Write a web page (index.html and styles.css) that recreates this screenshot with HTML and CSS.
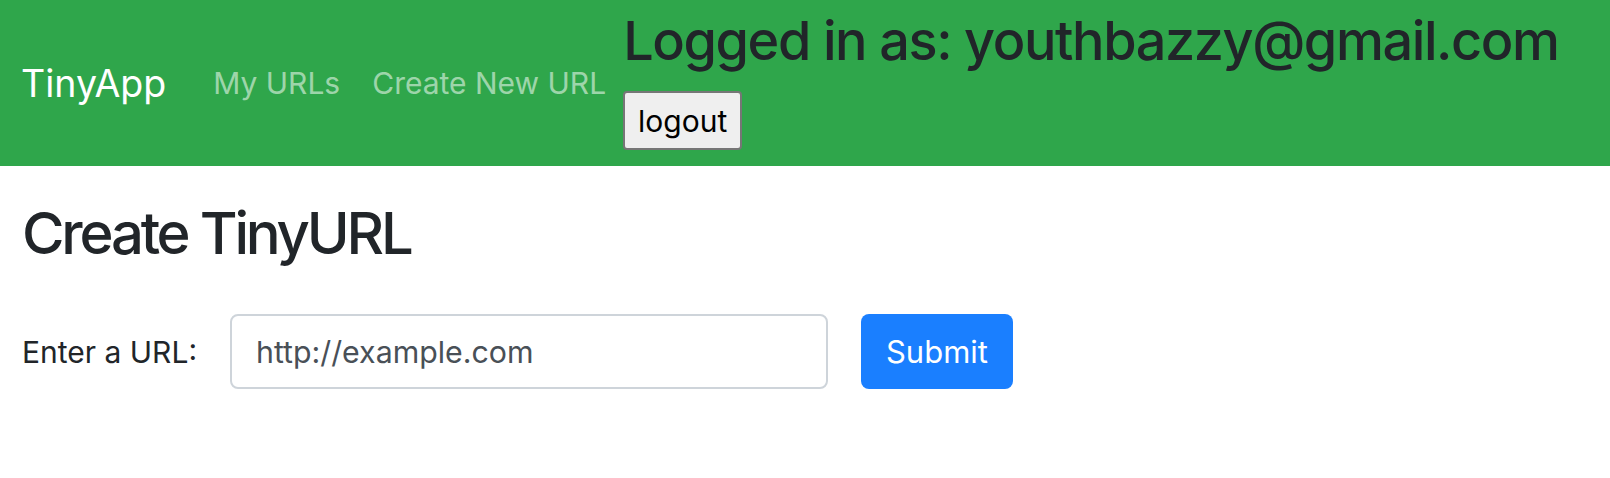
FILE: index.html
```html
<!DOCTYPE html>
<html lang="en">
<head>
<meta charset="utf-8">
<title>TinyApp</title>
<link rel="stylesheet" href="styles.css">
</head>
<body>
<nav class="navbar">
  <a class="brand" href="#">TinyApp</a>
  <div class="nav-links">
    <a class="nav-link" href="#">My URLs</a>
    <a class="nav-link" href="#">Create New URL</a>
  </div>
  <div class="user-box">
    <h2 class="user-title">Logged in as: youthbazzy@gmail.com</h2>
    <form class="logout-form">
      <button type="button" class="logout-btn">logout</button>
    </form>
  </div>
</nav>
<main class="content">
  <h1 class="page-title">Create TinyURL</h1>
  <form class="url-form">
    <label class="url-label" for="longURL">Enter a URL:</label>
    <input class="url-input" id="longURL" type="text" placeholder="http://example.com">
    <button type="button" class="submit-btn">Submit</button>
  </form>
</main>
</body>
</html>
```

FILE: styles.css
```css
* { box-sizing: border-box; }
html, body { margin: 0; padding: 0; }
body {
  font-family: Inter, "Noto Sans", "Liberation Sans", sans-serif;
  color: #212529;
  background: #fff;
}
.navbar {
  display: flex;
  align-items: center;
  background: #2fa64b;
  height: 166px;
  padding: 0 0 0 21px;
  white-space: nowrap;
}
.brand {
  flex-shrink: 0;
  color: #fff;
  text-decoration: none;
  font-size: 37.5px;
}
.nav-links {
  flex-shrink: 0;
  display: flex;
  gap: 32px;
  margin-left: 47px;
}
.nav-link {
  color: rgba(255,255,255,0.55);
  text-decoration: none;
  font-size: 30px;
}
.user-box {
  flex-shrink: 0;
  display: flex;
  flex-direction: column;
  align-items: flex-start;
  align-self: flex-start;
  margin-left: 17px;
  padding-top: 9px;
}
.user-title {
  margin: 0;
  font-size: 54px;
  font-weight: 500;
  letter-spacing: -1.4px;
  line-height: 64px;
  color: #212529;
}
.logout-form { margin: 18px 0 0 0; }
.logout-btn {
  font-family: Inter, "Liberation Sans", sans-serif;
  font-size: 30px;
  color: #000;
  background: #efefef;
  border: 2px solid #767676;
  border-radius: 4px;
  width: 119px;
  height: 59px;
  padding: 0;
}
.content { padding: 0 22px; }
.page-title {
  margin: 0;
  padding-top: 30px;
  font-size: 58px;
  font-weight: 500;
  letter-spacing: -3.2px;
  line-height: 74px;
}
.url-form {
  display: flex;
  align-items: center;
  margin-top: 44px;
}
.url-label {
  font-size: 30px;
  width: 208px;
}
.url-input {
  width: 598px;
  height: 75px;
  border: 2px solid #ced4da;
  border-radius: 8px;
  padding: 0 24px;
  font-family: inherit;
  font-size: 30.3px;
  color: #495057;
}
.url-input::placeholder { color: #495057; opacity: 1; }
.submit-btn {
  margin-left: 33px;
  width: 152px;
  height: 75px;
  border: none;
  border-radius: 8px;
  background: #1a7fff;
  color: #fff;
  font-family: inherit;
  font-size: 31px;
  padding: 0;
}
```
